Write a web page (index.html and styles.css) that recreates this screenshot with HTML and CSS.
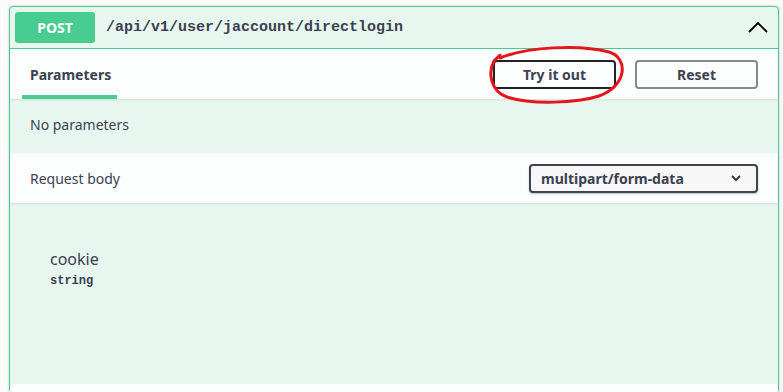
FILE: index.html
```html
<!DOCTYPE html>
<html lang="en">
<head>
  <meta charset="UTF-8">
  <title>POST /api/v1/user/jaccount/directlogin</title>
  <link rel="stylesheet" href="styles.css">
</head>
<body>

<div class="opblock">
  <div class="summary">
    <span class="method">POST</span>
    <span class="path">/api/v1/user/jaccount/directlogin</span>
    <svg class="arrow" width="20" height="20" viewBox="0 0 20 20">
      <polyline points="1,14 10,5 19,14" fill="none" stroke="#000" stroke-width="1.8"/>
    </svg>
  </div>

  <div class="section-header tabs">
    <div class="tab-item">Parameters</div>
    <div class="actions">
      <div class="try-wrap">
        <button class="btn try-out">Try it out</button>
        <svg class="scribble" width="140" height="62" viewBox="0 0 140 62">
          <path d="M13 14 C 40 3, 92 0, 122 8 C 142 14, 140 42, 112 52 C 90 59, 45 61, 20 53 C 3 47, 1 28, 7 17 L 13 11"
                fill="none" stroke="#e3161c" stroke-width="3" stroke-linecap="round"/>
        </svg>
      </div>
      <button class="btn reset">Reset</button>
    </div>
  </div>

  <div class="section-body params">No parameters</div>

  <div class="section-header request">
    <div class="label">Request body</div>
    <div class="select">
      <span>multipart/form-data</span>
      <svg width="12" height="8" viewBox="0 0 12 8">
        <polyline points="2,2 6,6 10,2" fill="none" stroke="#3b4151" stroke-width="2"/>
      </svg>
    </div>
  </div>

  <div class="section-body form">
    <div class="prop-name">cookie</div>
    <div class="prop-type">string</div>
  </div>

  <div class="section-header footer"></div>
</div>

</body>
</html>
```

FILE: styles.css
```css
html, body {
  height: 392px;
  overflow: hidden;
}

body {
  margin: 0;
  padding: 6px 4px 0 9px;
  box-sizing: border-box;
  background: #fafafa;
  color: #3b4151;
  font-family: "Noto Sans", "Open Sans", sans-serif;
}

.opblock {
  background: #e8f6f0;
  border: 1px solid #49cc90;
  border-radius: 4px;
  box-shadow: 0 0 3px rgba(0, 0, 0, 0.19);
}

.summary {
  display: flex;
  align-items: center;
  padding: 5px;
  border-bottom: 1px solid #49cc90;
}

.method {
  width: 80px;
  height: 31px;
  line-height: 31px;
  text-align: center;
  background: #49cc90;
  color: #fff;
  border-radius: 3px;
  font-size: 14px;
  font-weight: 700;
}

.path {
  flex: 1;
  padding-left: 11px;
  font-family: "Liberation Mono", "DejaVu Sans Mono", monospace;
  font-size: 15px;
  font-weight: 600;
  color: #3b4151;
}

.arrow {
  margin-right: 5px;
  margin-top: 1px;
}

.section-header {
  background: rgba(255, 255, 255, 0.85);
  box-shadow: 0 1px 2px rgba(0, 0, 0, 0.1);
  display: flex;
  align-items: center;
  height: 50px;
  padding: 0 20px;
  position: relative;
}

.tabs {
  padding-left: 12px;
}

.tab-item {
  align-self: stretch;
  display: flex;
  align-items: center;
  padding: 4px 6px 0 8px;
  font-size: 14px;
  font-weight: 700;
  border-bottom: 4px solid #49cc90;
  box-sizing: border-box;
}

.actions {
  margin-left: auto;
  display: flex;
  align-items: center;
  gap: 19px;
}

.try-wrap {
  position: relative;
}

.btn {
  width: 123px;
  height: 29px;
  background: transparent;
  border-radius: 4px;
  font-family: "Noto Sans", "Open Sans", sans-serif;
  font-size: 14px;
  font-weight: 700;
  color: #3b4151;
  padding: 0;
  display: block;
}

.try-out {
  border: 2px solid #222;
}

.reset {
  border: 2px solid #888;
}

.scribble {
  position: absolute;
  left: -6px;
  top: -16px;
  pointer-events: none;
}

.section-body {
  padding: 0 20px;
  font-size: 14px;
}

.params {
  height: 54px;
  line-height: 52px;
}

.label {
  flex: 1;
  font-size: 14px;
}

.select {
  width: 201px;
  height: 25px;
  border: 2px solid #41444e;
  border-radius: 4px;
  background: #f7f7f7;
  box-shadow: 0 1px 2px rgba(0, 0, 0, 0.25);
  display: flex;
  align-items: center;
  justify-content: space-between;
  padding: 0 14px 0 10px;
  font-size: 14px;
  font-weight: 700;
}

.form {
  height: 181px;
  padding: 45px 40px 0;
  box-sizing: border-box;
}

.prop-name {
  font-size: 16px;
  line-height: 22px;
}

.prop-type {
  font-family: "Liberation Mono", "DejaVu Sans Mono", monospace;
  font-size: 12px;
  font-weight: 700;
  line-height: 22px;
}

.footer {
  height: 8px;
}
```
